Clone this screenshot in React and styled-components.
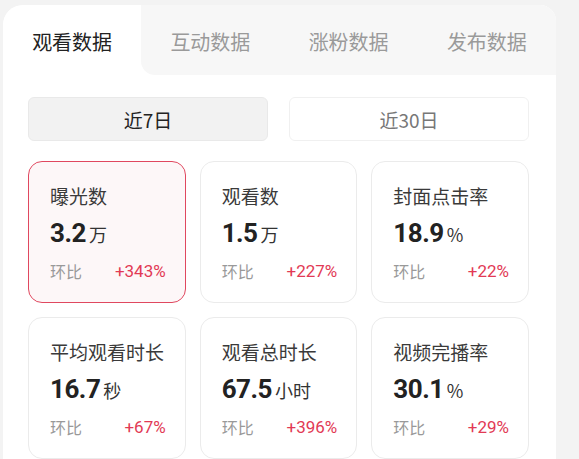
import styled, { createGlobalStyle } from "styled-components";

const GlobalStyle = createGlobalStyle`
  html, body {
    margin: 0;
    padding: 0;
    background: #f3f3f3;
    font-family: "Noto Sans CJK SC", "Noto Sans", sans-serif;
  }
`;

const Panel = styled.div`
  box-sizing: border-box;
  margin: 5px 0 0 3px;
  width: 553px;
  height: 454px;
  background: #ffffff;
  border-radius: 20px 16px 0 0;
  overflow: hidden;
`;

const TabBar = styled.div`
  display: flex;
  height: 70px;
`;

const ActiveTab = styled.div`
  flex: 1;
  display: flex;
  align-items: center;
  justify-content: center;
  background: #ffffff;
  border-top-left-radius: 20px;
  font-size: 20px;
  color: #222;
  padding-top: 2px;
`;

const OtherTabs = styled.div`
  flex: 3;
  display: flex;
  background: #f7f7f7;
  border-bottom-left-radius: 14px;
`;

const Tab = styled.div`
  flex: 1;
  display: flex;
  align-items: center;
  justify-content: center;
  font-size: 20px;
  color: #9a9a9a;
  padding-top: 2px;
`;

const Body = styled.div`
  padding: 22px 27px 0 25px;
`;

const Segments = styled.div`
  display: grid;
  grid-template-columns: 1fr 1fr;
  gap: 21px;
`;

const Segment = styled.div`
  box-sizing: border-box;
  height: 44px;
  display: flex;
  align-items: center;
  justify-content: center;
  border-radius: 6px;
  font-size: 19px;
  border: 1px solid ${(p) => (p.$active ? "#e9e9e9" : "#f0f0f0")};
  background: ${(p) => (p.$active ? "#f2f2f2" : "#ffffff")};
  color: ${(p) => (p.$active ? "#222" : "#777")};
`;

const Grid = styled.div`
  margin-top: 20px;
  display: grid;
  grid-template-columns: repeat(3, 1fr);
  column-gap: 14px;
  row-gap: 14px;
`;

const Card = styled.div`
  box-sizing: border-box;
  height: 142px;
  padding: 21px 19px 0 21px;
  border-radius: 14px;
  border: ${(p) => (p.$active ? "1.5px solid #e0485f" : "1px solid #ebebeb")};
  background: ${(p) => (p.$active ? "#fdf7f8" : "#ffffff")};
`;

const Label = styled.div`
  font-size: 19px;
  line-height: 26px;
  color: #3a3a3a;
`;

const ValueRow = styled.div`
  margin-top: 8px;
  display: flex;
  align-items: baseline;
  line-height: 32px;
  color: #222;
`;

const Value = styled.span`
  font-family: Roboto, "Noto Sans CJK SC", sans-serif;
  font-size: 26px;
  font-weight: 700;
  letter-spacing: -0.5px;
`;

const Unit = styled.span`
  margin-left: 3px;
  font-size: 18px;
  color: #333;
`;

const Compare = styled.div`
  margin-top: 10px;
  display: flex;
  justify-content: space-between;
  align-items: center;
  line-height: 22px;
`;

const CompareLabel = styled.span`
  font-size: 16px;
  color: #999;
`;

const Change = styled.span`
  font-family: Roboto, "Noto Sans CJK SC", sans-serif;
  font-size: 17px;
  color: #e23a55;
`;

const metrics = [
  { label: "曝光数", value: "3.2", unit: "万", change: "+343%", active: true },
  { label: "观看数", value: "1.5", unit: "万", change: "+227%" },
  { label: "封面点击率", value: "18.9", unit: "%", change: "+22%" },
  { label: "平均观看时长", value: "16.7", unit: "秒", change: "+67%" },
  { label: "观看总时长", value: "67.5", unit: "小时", change: "+396%" },
  { label: "视频完播率", value: "30.1", unit: "%", change: "+29%" },
];

export default function App() {
  return (
    <>
      <GlobalStyle />
      <Panel>
        <TabBar>
          <ActiveTab>观看数据</ActiveTab>
          <OtherTabs>
            <Tab>互动数据</Tab>
            <Tab>涨粉数据</Tab>
            <Tab>发布数据</Tab>
          </OtherTabs>
        </TabBar>
        <Body>
          <Segments>
            <Segment $active>近7日</Segment>
            <Segment>近30日</Segment>
          </Segments>
          <Grid>
            {metrics.map((m) => (
              <Card key={m.label} $active={m.active}>
                <Label>{m.label}</Label>
                <ValueRow>
                  <Value>{m.value}</Value>
                  <Unit>{m.unit}</Unit>
                </ValueRow>
                <Compare>
                  <CompareLabel>环比</CompareLabel>
                  <Change>{m.change}</Change>
                </Compare>
              </Card>
            ))}
          </Grid>
        </Body>
      </Panel>
    </>
  );
}
